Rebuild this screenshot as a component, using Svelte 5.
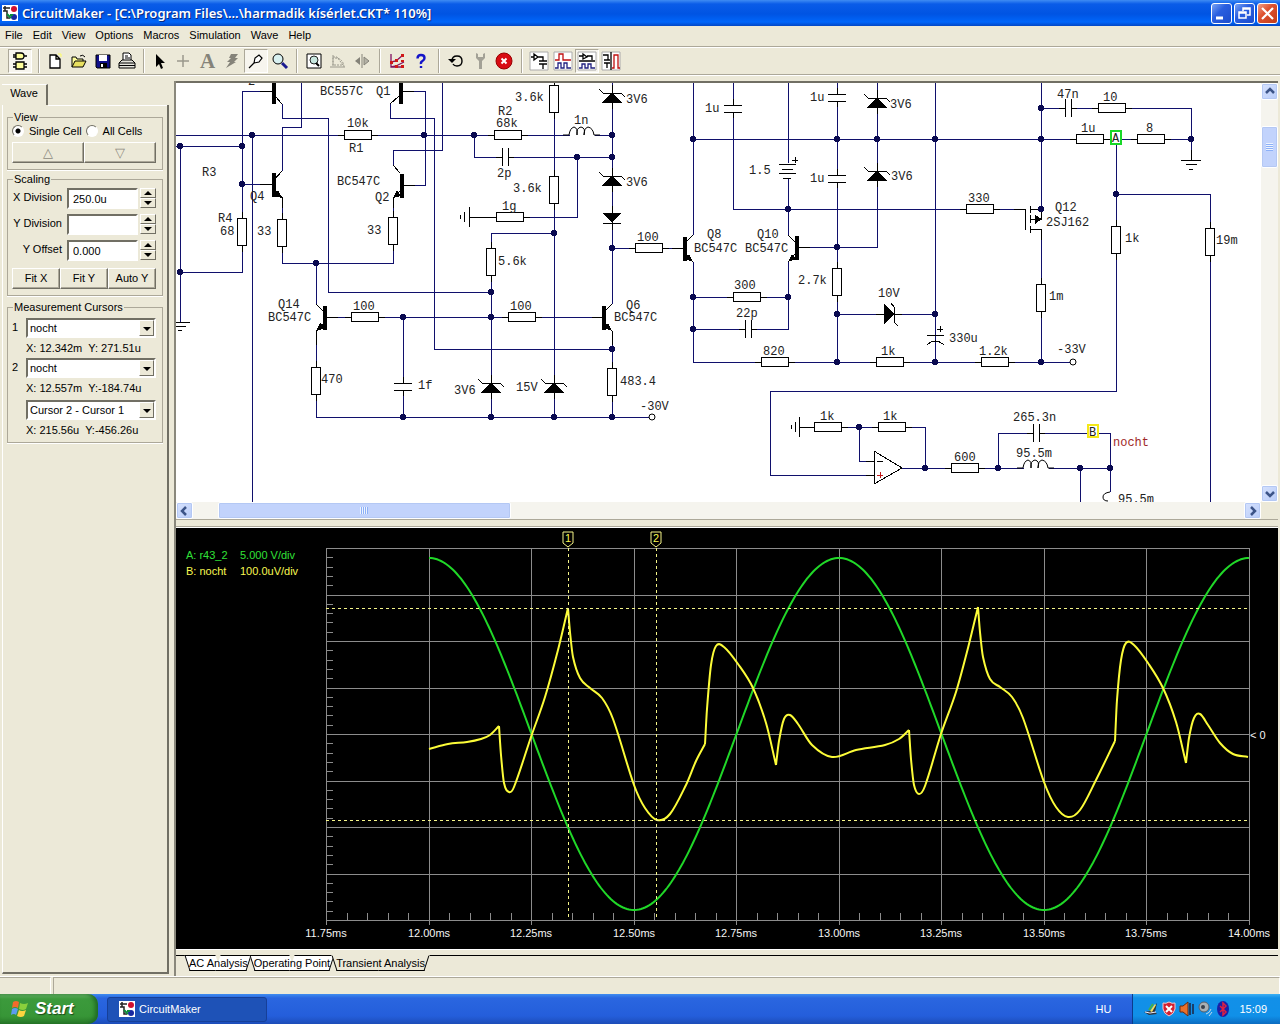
<script lang="ts">
  type Point = [number, number];

  const menus = ['File', 'Edit', 'View', 'Options', 'Macros', 'Simulation', 'Wave', 'Help'];

  const toolGroups = [
    [
      {
        name: 'Digital gates',
        pressed: true,
        art: '<path d="M4 0h5q3 0 3 3t-3 3H4zM1 2h3M1 4h3M12 3h3M4 9h8v7H4zM1 11h3M1 14h3M12 11h3M12 14h3" fill="#ffff9c" stroke="#000" stroke-width="1.300"/>',
      },
    ],
    [
      { name: 'New', art: '<path d="M3 2h6l4 4v9H3zM9 2v4h4" fill="#fff" stroke="#000" stroke-width="1.300"/><path d="M11 1h3v3" fill="none" stroke="#ffff60"/>' },
      { name: 'Open', art: '<path d="M1 14V4h4l1 2h6v2" fill="#ffff9c" stroke="#000"/><path d="M1 14l3-6h11l-3 6z" fill="#e8e060" stroke="#000"/><path d="M9 3q3-2 5 1" fill="none" stroke="#000"/>' },
      { name: 'Save', art: '<path d="M1 2h14v13H2l-1-1z" fill="#10108a" stroke="#000"/><path d="M4 2h8v6H4z" fill="#fff"/><path d="M5 10h7v5H5z" fill="#000"/><path d="M6 11h2v3H6z" fill="#fff"/>' },
      { name: 'Print', art: '<path d="M4 7V0h6l2 2v5" fill="#fff" stroke="#000"/><path d="M6 3h3M6 5h5" stroke="#000"/><path d="M0 10l3-3h10l3 3v5H0z" fill="#e4e4dc" stroke="#000"/><path d="M0 10h16M0 12.500h16" stroke="#000"/>' },
    ],
    [
      { name: 'Select', art: '<path d="M4 1v13l3-3 2 5 2-1-2-5h4z" fill="#000"/>' },
      { name: 'Wire', art: '<path d="M7 2v12M1 8h12" stroke="#9a988c" stroke-width="1.500"/>' },
      { name: 'Text', art: '<text class="letter" x="0" y="15">A</text>' },
      { name: 'Delete', art: '<path d="M7 1h7l-3 4h3l-4 4h2L2 15l4-6H3l4-4H5z" fill="#858379"/>' },
      { name: 'Probe', pressed: true, art: '<path d="M1 15l5-5M6 10l1-5 4-3 3 3-3 4z" fill="#fff" stroke="#000" stroke-width="1.200"/>' },
      { name: 'Zoom', art: '<circle cx="6" cy="6" r="5" fill="#d8f0f0" stroke="#000"/><path d="M10 10l5 5" stroke="#1a1a90" stroke-width="3"/>' },
    ],
    [
      { name: 'Fit page', art: '<path d="M1 1h14v14H1z" fill="#fff" stroke="#000"/><circle cx="8" cy="7" r="4" fill="#c8e8e0" stroke="#222"/><path d="M10 10l3 3" stroke="#000" stroke-width="2"/>' },
      { name: 'Rotate', art: '<path d="M3 2v12M3 4h4l6 8H3zM5 5q8 0 9 9" fill="none" stroke="#9a988c" stroke-dasharray="2 1"/><path d="M0 14h15" stroke="#9a988c"/>' },
      { name: 'Mirror', art: '<path d="M8 1v14" stroke="#858379"/><path d="M6 4v8L1 8z" fill="#858379"/><path d="M10 4v8l5-4z" fill="#b4b2a6" stroke="#858379"/>' },
    ],
    [
      { name: 'Check wiring', art: '<path d="M2 1v13h13M2 9l5-1 7-6M2 14l5-1 8-4" fill="none" stroke="#801060" stroke-width="1.300"/><path d="M1 8h3v3H1zM6 6h3v3H6zM12 1h3v3h-3zM6 12h3v3H6zM12 12h3v3h-3zM12 7h3v2h-3z" fill="#d01818"/>' },
      { name: 'Help', art: '<path d="M4.500 5.500q0-3.500 3.500-3.500t3.500 3q0 2-2 3t-1.500 3M8 13v2" fill="none" stroke="#1414c8" stroke-width="2.400"/>' },
    ],
    [
      { name: 'Reset', art: '<path d="M4 8q0-5 5-5 5 0 5 5t-5 5q-3 0-4-2" fill="none" stroke="#000" stroke-width="1.400"/><path d="M0 6h8l-4 4z" fill="#000"/>' },
      { name: 'Analyses', art: '<path d="M4 0v5l3 3v8h3V8l3-3V0l-2 1v3H6V1z" fill="#a3a196"/>' },
      { name: 'Stop', art: '<circle cx="8" cy="8" r="8" fill="#d80c14" stroke="#900"/><path d="M5.500 5.500l5 5M10.500 5.500l-5 5" stroke="#fff" stroke-width="2"/>' },
    ],
    [
      { name: 'Schematic', art: '<path d="M-1-1h18v18H-1z" fill="#fff" stroke="#aaa"/><path d="M0 4h3M3 1v6l4-3zM7 4h5v4M8 8h8M8 11h8M12 11v5" fill="none" stroke="#000" stroke-width="1.300"/>' },
      { name: 'Waveforms', art: '<path d="M-1-1h18v18H-1z" fill="#fff" stroke="#aaa"/><path d="M0 7h4V1h4v6h8" fill="none" stroke="#c01010" stroke-width="1.300"/><path d="M0 15h3v-5h3v5h3v-5h3v5h4" fill="none" stroke="#202080" stroke-width="1.300"/>' },
      { name: 'Split horizontally', pressed: true, art: '<path d="M-1-1h18v18H-1z" fill="#fff" stroke="#aaa"/><path d="M0 3h4M4 1v5l4-2zM8 3h5v4M0 8h16" fill="none" stroke="#000" stroke-width="1.300"/><path d="M0 15h3v-4h3v4h3v-4h3v4h4" fill="none" stroke="#202080" stroke-width="1.300"/>' },
      { name: 'Split vertically', art: '<path d="M-1-1h18v18H-1z" fill="#fff" stroke="#aaa"/><path d="M0 2h5v5M1 7h6M1 10h6M4 10v5M8-1v18" fill="none" stroke="#000" stroke-width="1.300"/><path d="M9 15h2V2h4v13h2" fill="none" stroke="#c01010" stroke-width="1.300"/>' },
    ],
  ];

  let cell = 'single';
  let xDivision = '250.0u';
  let yDivision = '';
  let yOffset = '0.000';

  const cursors = [
    { id: '1', trace: 'nocht', readout: 'X: 12.342m  Y: 271.51u' },
    { id: '2', trace: 'nocht', readout: 'X: 12.557m  Y:-184.74u' },
    { id: '', trace: 'Cursor 2 - Cursor 1', readout: 'X: 215.56u  Y:-456.26u' },
  ];

  const wires = [
    'M260 91H242V272H180M176 146H242M180 146V322M252 135V502M176 135H612M242 184H260',
    'M282 104V118H328V292H491M301 83V127H282V171M282 200V263H393V200M316 263V304',
    'M414 91H425V185H415M390 104V118H434V349H612M442 83V150H393V165',
    'M474 135V157H612M577 157V217H469M554 83V417M612 83V304M554 233H491V417',
    'M612 248H672M693 83V235M693 262V362H1070M693 297H788M693 329H788V262M788 235V178M788 163V83',
    'M693 139H1191M733 83V209H1014M837 83V362M877 83V247H810M935 83V362M837 314H935',
    'M1041 83V209M1041 230V362M1041 108H1191V150M1116 139V391H770V475H866M1116 194H1210V502',
    'M338 317H592M316 331V417H649M403 317V417M612 331V417',
    'M806 427H925V468M859 427V461H868M902 468H1110M998 468V433H1110V492M1080 468V502',
  ];

  // collector/emitter leads and other thin black artwork
  const leads = [
    'M260 91H272M275 96L282 104M401 91H414M399 96L390 104',
    'M260 184H272M282 171L275 179M275 190L282 197V208M393 165L400 173M404 185H415M401 190L393 198V208',
    'M316 304L323 311M327 317H338M324 323L316 331V345M612 304L605 311M592 317H602M605 323L612 331V345',
    'M672 248H683M693 235L686 242M686 254L693 262M788 235L795 242M799 247H810M796 253L788 262',
    'M1014 209H1025V230M1030 206V213M1030 215V223M1030 226V233M1030 209H1041V219H1030M1030 229H1041V240',
    'M173 322H190M175 326H186M178 330H182',
    'M469 207V227M464 212V222M460 215V219M469 217H490',
    'M799 417V437M795 422V432M791 425V429M799 427H808',
    'M1191 150V160M1181 160H1201M1186 164H1197M1189 169H1193',
    'M779 164H796M782 169H793M779 173H796M783 178H791M792 160H798M795 157V163',
    'M927 335H944M927 345Q935 337 944 345M937 329H943M940 326V332',
    'M874 451V484L902 468ZM877 461H883M866 475H874M866 461H874',
  ];

  const bars: Point[] = [[272, 80], [399, 80], [272, 173], [400, 174], [323, 306], [602, 306], [683, 237], [795, 236]];
  const arrows = ['282,198 278,190 274,196', '393,198 397,190 401,196', '316,331 320,323 325,328', '612,331 608,323 604,328', '693,262 689,254 685,259', '788,262 792,254 796,259', '1035,215 1035,224 1042,219'];

  // resistors: start of the body along the wire, position of the wire across it
  const hResistors: Point[] = [[344, 135], [494, 135], [496, 217], [635, 248], [351, 317], [508, 317], [733, 297], [761, 362], [876, 362], [981, 362], [814, 427], [878, 427], [951, 468], [966, 209], [1098, 108], [1076, 139], [1137, 139]];
  const vResistors: Point[] = [[242, 218], [282, 219], [393, 217], [554, 85], [554, 176], [491, 248], [316, 367], [612, 368], [837, 268], [1041, 284], [1116, 226], [1210, 228]];
  const hCaps: Point[] = [[502, 157], [745, 329], [1065, 108], [1033, 433]];
  const vCaps: Point[] = [[733, 105], [837, 94], [837, 175], [403, 383]];
  const zeners: Point[] = [[612, 93], [612, 176], [877, 98], [877, 171], [491, 383], [554, 383]];
  const coils: Point[] = [[569, 135], [1023, 468]];
  const junctions: Point[] = [
    [252, 135], [424, 135], [180, 146], [242, 146], [242, 184], [180, 272], [316, 263], [474, 135], [612, 135], [577, 157], [612, 157],
    [554, 233], [612, 248], [491, 292], [491, 317], [403, 317], [612, 349], [403, 417], [491, 417], [554, 417], [612, 417],
    [693, 139], [837, 139], [877, 139], [935, 139], [1041, 139], [1041, 108], [1191, 139], [788, 209], [837, 247], [693, 297], [788, 297],
    [693, 329], [837, 314], [935, 314], [837, 362], [935, 362], [1041, 362], [1116, 194], [1041, 209],
    [859, 427], [925, 468], [998, 468], [1080, 468], [1110, 468],
  ];

  const parts: [string, number, number][] = [
    ['2', 248, 85], ['BC557C', 320, 95], ['Q1', 376, 95], ['10k', 347, 127], ['R1', 349, 152], ['BC547C', 337, 185], ['Q2', 375, 201],
    ['R3', 202, 176], ['Q4', 250, 200], ['R4', 218, 222], ['68', 220, 235], ['33', 257, 235], ['33', 367, 234],
    ['3.6k', 515, 101], ['R2', 498, 115], ['68k', 496, 127], ['1n', 574, 124], ['2p', 497, 177], ['3.6k', 513, 192], ['1g', 502, 210],
    ['3V6', 626, 103], ['3V6', 626, 186], ['5.6k', 498, 265], ['100', 637, 241], ['Q8', 707, 238], ['BC547C', 694, 252],
    ['Q14', 278, 308], ['BC547C', 268, 321], ['100', 353, 310], ['100', 510, 310], ['Q6', 626, 309], ['BC547C', 614, 321],
    ['470', 321, 383], ['1f', 418, 389], ['3V6', 454, 394], ['15V', 516, 391], ['483.4', 620, 385], ['-30V', 640, 410],
    ['1u', 705, 112], ['1u', 810, 101], ['3V6', 890, 108], ['1.5', 749, 174], ['1u', 810, 182], ['3V6', 891, 180],
    ['Q10', 757, 238], ['BC547C', 745, 252], ['300', 734, 289], ['22p', 736, 317], ['2.7k', 798, 284], ['10V', 878, 297], ['330u', 949, 342],
    ['820', 763, 355], ['1k', 881, 355], ['1.2k', 979, 355], ['-33V', 1057, 353], ['1m', 1049, 300],
    ['47n', 1057, 98], ['10', 1103, 101], ['1u', 1081, 132], ['8', 1146, 132], ['330', 968, 202], ['Q12', 1055, 211], ['2SJ162', 1046, 226],
    ['1k', 1125, 242], ['19m', 1216, 244], ['1k', 820, 420], ['1k', 883, 420], ['600', 954, 461], ['265.3n', 1013, 421], ['95.5m', 1016, 457], ['95.5m', 1118, 503],
  ];

  const gridX = Array.from({ length: 10 }, (_, i) => Math.round(326 + i * 102.5));
  const gridY = Array.from({ length: 9 }, (_, i) => Math.round(548 + i * 46.5));
  const ticksX = Array.from({ length: 45 }, (_, i) => Math.round(326 + i * 20.5));
  const ticksY = Array.from({ length: 40 }, (_, i) => Math.round(548 + i * 9.3));
  const times = ['11.75ms', '12.00ms', '12.25ms', '12.50ms', '12.75ms', '13.00ms', '13.25ms', '13.50ms', '13.75ms', '14.00ms'];

  const sine = Array.from({ length: 411 }, (_, i) => 429 + i * 2)
    .filter((x) => x <= 1249)
    .map((x) => `${x},${(734 - 176 * Math.cos((2 * Math.PI * (x - 429)) / 410)).toFixed(1)}`)
    .join(' ');

  // each run is smooth, the runs meet in the sharp corners
  const nochtRuns: Point[][] = [
    [[429, 749], [448, 744], [467, 742], [481, 739], [490, 735], [499, 726]],
    [[499, 726], [501, 755], [504, 783], [509, 792], [514, 787], [531, 737], [545, 697], [558, 650], [568, 608]],
    [[568, 608], [570, 632], [573, 657], [580, 678], [590, 688], [602, 698], [613, 719], [634, 785], [645, 808], [657, 820], [670, 814], [686, 785], [696, 761], [705, 744]],
    [[705, 744], [707, 709], [711, 665], [716, 646], [724, 647], [738, 664], [753, 688], [766, 723], [776, 765]],
    [[776, 765], [779, 741], [784, 719], [790, 715], [798, 724], [812, 745], [832, 757], [856, 750], [885, 745], [899, 739], [909, 730]],
    [[909, 730], [911, 759], [914, 785], [919, 794], [925, 786], [941, 734], [956, 692], [968, 648], [978, 607]],
    [[978, 607], [980, 632], [983, 657], [990, 679], [1000, 687], [1012, 697], [1023, 718], [1044, 782], [1056, 807], [1068, 817], [1080, 810], [1096, 780], [1115, 741]],
    [[1115, 741], [1117, 700], [1121, 660], [1126, 643], [1134, 645], [1148, 663], [1163, 688], [1176, 722], [1186, 763]],
    [[1186, 763], [1189, 738], [1194, 718], [1200, 714], [1208, 725], [1220, 743], [1233, 754], [1248, 757]],
  ];

  function smooth(points: Point[]): string {
    let d = `M${points[0]}`;
    for (let i = 0; i < points.length - 1; i++) {
      const p0 = points[i - 1] ?? points[i];
      const p1 = points[i];
      const p2 = points[i + 1];
      const p3 = points[i + 2] ?? p2;
      // horizontal handles stay inside the step so steep edges do not overshoot
      const reach = (p2[0] - p1[0]) / 3;
      const s1 = (p2[1] - p0[1]) / (p2[0] - p0[0]);
      const s2 = (p3[1] - p1[1]) / (p3[0] - p1[0]);
      d += `C${p1[0] + reach} ${p1[1] + s1 * reach} ${p2[0] - reach} ${p2[1] - s2 * reach} ${p2[0]} ${p2[1]}`;
    }
    return d;
  }

  const nocht = nochtRuns.map(smooth).join('');
</script>

{#snippet appIcon()}
  <svg class="app-icon" viewBox="0 0 16 16" aria-hidden="true">
    <rect width="16" height="16" fill="#fff" />
    <path d="M1 3h7M1 6h4v7h3M3 1v5" fill="none" stroke="#222" stroke-width="1.5" />
    <circle cx="12" cy="4" r="3" fill="#d01030" />
    <circle cx="12" cy="12" r="3" fill="#1828a0" />
    <path d="M5 9l4 4M8 10h3" stroke="#0a8a3a" stroke-width="2" />
  </svg>
{/snippet}

<div class="desktop">
  <header class="titlebar">
    {@render appIcon()}
    <h1>CircuitMaker - [C:\Program Files\...\harmadik kísérlet.CKT* 110%]</h1>
    <div class="window-buttons">
      <button aria-label="Minimize"><svg viewBox="0 0 19 19"><path d="M4 14h7" stroke="#fff" stroke-width="3" /></svg></button>
      <button aria-label="Restore"><svg viewBox="0 0 19 19"><path d="M4 8h7v6H4zM4 9h7M8 7V4h7v7h-3M8 5h7" fill="none" stroke="#fff" stroke-width="1.500" /></svg></button>
      <button class="close" aria-label="Close"><svg viewBox="0 0 19 19"><path d="M4 4l11 11M15 4L4 15" stroke="#fff" stroke-width="2.200" /></svg></button>
    </div>
  </header>

  <nav class="menubar">
    {#each menus as menu}
      <button>{menu}</button>
    {/each}
  </nav>

  <div class="toolbar">
    {#each toolGroups as group, i}
      <div class="tool-group" class:wide={i > 2}>
        {#each group as tool}
          <button class:pressed={tool.pressed} aria-label={tool.name}>
            <svg viewBox="0 0 16 16">{@html tool.art}</svg>
          </button>
        {/each}
      </div>
    {/each}
  </div>

  <main>
    <aside>
      <button class="side-tab">Wave</button>
      <div class="side-page">
        <fieldset>
          <legend>View</legend>
          <div class="radios">
            <label><input type="radio" value="single" bind:group={cell} />Single Cell</label>
            <label><input type="radio" value="all" bind:group={cell} />All Cells</label>
          </div>
          <div class="button-row">
            <button class="dim">△</button>
            <button class="dim">▽</button>
          </div>
        </fieldset>

        <fieldset class="scaling">
          <legend>Scaling</legend>
          <div class="field">
            <label for="xdiv">X Division</label>
            <input id="xdiv" bind:value={xDivision} />
            <span class="spinner"><button aria-label="Increase X division"></button><button aria-label="Decrease X division" class="down"></button></span>
          </div>
          <div class="field">
            <label for="ydiv">Y Division</label>
            <input id="ydiv" bind:value={yDivision} />
            <span class="spinner"><button aria-label="Increase Y division"></button><button aria-label="Decrease Y division" class="down"></button></span>
          </div>
          <div class="field">
            <label for="yoff">Y Offset</label>
            <input id="yoff" bind:value={yOffset} />
            <span class="spinner"><button aria-label="Increase Y offset"></button><button aria-label="Decrease Y offset" class="down"></button></span>
          </div>
          <div class="button-row fit">
            <button>Fit X</button>
            <button>Fit Y</button>
            <button>Auto Y</button>
          </div>
        </fieldset>

        <fieldset class="cursors">
          <legend>Measurement Cursors</legend>
          {#each cursors as cursor, i}
            <div class="cursor">
              <label for="cursor{i}">{cursor.id}</label>
              <span class="combo">
                <select id="cursor{i}" aria-label={cursor.id ? `Cursor ${cursor.id}` : 'Difference'}>
                  <option>{cursor.trace}</option>
                </select>
              </span>
              <output>{cursor.readout}</output>
            </div>
          {/each}
        </fieldset>
      </div>
    </aside>

    <div class="views">
      <section class="schematic">
        <svg class="sheet" viewBox="176 83 1085 419">
          <g class="wire">
            {#each wires as d}<path {d} />{/each}
          </g>
          <g class="part">
            {#each leads as d}<path {d} />{/each}
            {#each hResistors as [x, y]}
              <path d="M{x - 6} {y}h40" />
              <rect {x} y={y - 5} width="27" height="9" />
            {/each}
            {#each vResistors as [x, y]}
              <path d="M{x} {y - 6}v40" />
              <rect x={x - 5} {y} width="9" height="27" />
            {/each}
            {#each hCaps as [x, y]}
              <path class="gap" d="M{x + 1} {y}h5" />
              <path d="M{x - 6} {y}h6v-9v18M{x + 12} {y}h-6v-9v18" />
            {/each}
            {#each vCaps as [x, y]}
              <path class="gap" d="M{x} {y + 1}v6" />
              <path d="M{x} {y - 6}v6h-9h18M{x} {y + 13}v-6h-9h18" />
            {/each}
            {#each zeners as [x, y]}
              <path d="M{x - 13} {y - 4}l4 4h18l4 4M{x} {y - 8}v24" />
              <path class="solid" d="M{x} {y}l9 9h-18z" />
            {/each}
            <path class="solid" d="M603 213h18l-9 9z" />
            <path d="M603 223h18M612 206v24" />
            <path class="solid" d="M884 304v20l10-10z" />
            <path d="M891 303l3 4v15l4 4M876 314h26" />
            {#each coils as [x, y]}
              <path class="gap" d="M{x + 1} {y}h25" />
              <path class="curve" d="M{x - 6} {y}h6q1-7 5-8q4 1 3 8q-1-7 4-8q5 1 3 8q0-7 4-8q5 1 6 8h6" />
            {/each}
            <path class="curve" d="M1110 492q-7 1-7 5t5 4" />
            {#each bars as [x, y]}
              <rect class="solid" {x} {y} width="3" height="23" />
            {/each}
            {#each arrows as points}<polygon class="solid" {points} />{/each}
            <circle class="terminal" cx="652" cy="417" r="3" />
            <circle class="terminal" cx="1073" cy="362" r="3" />
          </g>
          <g class="junction">
            {#each junctions as [cx, cy]}<circle {cx} {cy} r="2.500" />{/each}
          </g>
          <g class="names">
            {#each parts as [name, x, y]}<text {x} {y}>{name}</text>{/each}
            <text class="red" x="1113" y="446">nocht</text>
          </g>
          <path class="red-line" d="M877 475h6M880 472v6" />
          <g class="names">
            <rect class="probe-a" x="1111" y="131" width="10" height="13" />
            <text x="1112" y="142">A</text>
            <rect class="probe-b" x="1088" y="425" width="10" height="12" />
            <text x="1089" y="436">B</text>
          </g>
        </svg>
        <div class="scroll vertical">
          <button aria-label="Scroll up"><svg viewBox="0 0 15 15"><path d="M4 9l4-4 4 4" /></svg></button>
          <span class="thumb"></span>
          <button class="end" aria-label="Scroll down"><svg viewBox="0 0 15 15"><path d="M4 6l4 4 4-4" /></svg></button>
        </div>
        <div class="scroll horizontal">
          <button aria-label="Scroll left"><svg viewBox="0 0 15 15"><path d="M9 4L5 8l4 4" /></svg></button>
          <span class="thumb"></span>
          <button class="end" aria-label="Scroll right"><svg viewBox="0 0 15 15"><path d="M6 4l4 4-4 4" /></svg></button>
        </div>
      </section>

      <section class="waves">
        <svg class="scope" viewBox="176 528 1102 421">
          <g class="grid">
            {#each gridX as x}<path d="M{x} 548V925" />{/each}
            {#each gridY as y}<path d="M326 {y}H1249" />{/each}
            {#each ticksX as x}<path d="M{x} 913V920" />{/each}
            {#each ticksY as y}<path d="M326 {y}h7" />{/each}
          </g>
          <polyline class="trace-a" points={sine} />
          <path class="trace-b" d={nocht} />
          <path class="cursor-line" d="M568 548V920M656 548V920M326 608H1248M326 820H1248" />
          <path class="flag" d="M563 532h10v11l-5 4-5-4zM651 532h10v11l-5 4-5-4z" />
          <text class="b-text" x="565" y="542">1</text>
          <text class="b-text" x="653" y="542">2</text>
          <text class="a-text" x="186" y="559">A: r43_2</text>
          <text class="a-text" x="240" y="559">5.000 V/div</text>
          <text class="b-text" x="186" y="575">B: nocht</text>
          <text class="b-text" x="240" y="575">100.0uV/div</text>
          {#each times as time, i}<text class="time" x={gridX[i]} y="937">{time}</text>{/each}
          <text x="1250" y="739">&lt; 0</text>
        </svg>
      </section>

      <div class="sheet-tabs">
        <span class="lead-in"></span>
        <button>AC Analysis</button>
        <button>Operating Point</button>
        <button class="active">Transient Analysis</button>
        <span class="rest"></span>
      </div>
    </div>
  </main>

  <div class="statusbar"><span></span><span></span></div>

  <footer class="taskbar">
    <button class="start">
      <svg viewBox="0 0 20 20" aria-hidden="true">
        <path d="M3 3q3-2 6 0L8 9Q5 7 2 9z" fill="#f26a2c" />
        <path d="M10 4q4 2 8 0l-2 6q-3 2-7 0z" fill="#8ad03c" />
        <path d="M2 10q3-2 6 0l-2 6q-2-2-5 0z" fill="#5c9cf0" />
        <path d="M9 11q3 2 7 0l-2 6q-3 2-7 0z" fill="#fcd440" />
      </svg>
      Start
    </button>
    <button class="task">{@render appIcon()}CircuitMaker</button>
    <span class="lang">HU</span>
    <div class="tray">
      <svg viewBox="0 0 16 16"><path d="M1 11l6-1 7-8-2 9 2 2-8 1z" fill="#30343c" /><path d="M7 10l5-7 1 1-4 7z" fill="#f4e060" /><path d="M6 9l4-6" stroke="#40b050" stroke-width="2" /><path d="M2 11l5 1 6-1" stroke="#eef" /></svg>
      <svg viewBox="0 0 16 16"><path d="M8 1q3 2 6 1v6q-1 5-6 7-5-2-6-7V2q3 1 6-1z" fill="#d42030" stroke="#f4c8cc" /><path d="M5 5l6 6M11 5l-6 6" stroke="#fff" stroke-width="2" /></svg>
      <svg viewBox="0 0 16 16"><path d="M1 5h3l5-4v14l-5-4H1z" fill="#e8702c" stroke="#6a2a10" /><path d="M11 2v12M14 3v10" stroke="#1c2440" stroke-width="1.500" /></svg>
      <svg viewBox="0 0 16 16"><circle cx="7" cy="6" r="5" fill="#a8b0b4" stroke="#58606a" /><circle cx="6" cy="6" r="2" fill="#38404a" /><path d="M9 13q4-1 5-5M12 15l3-4" fill="none" stroke="#c0d8ec" /></svg>
      <svg viewBox="0 0 16 16"><ellipse cx="8" cy="8" rx="6" ry="8" fill="#1820a8" /><path d="M5 5l6 6-3 3V2l3 3-6 6" fill="none" stroke="#e02040" stroke-width="1.500" /></svg>
      <time>15:09</time>
    </div>
  </footer>
</div>

<style>
  :global(body) {
    margin: 0;
    background: #ece9d8;
  }

  .desktop {
    display: flex;
    flex-direction: column;
    min-height: 100vh;
    background: #ece9d8;
    color: #000;
    font: 11px/13px 'Liberation Sans', Arial, sans-serif;
  }

  button,
  input,
  select {
    box-sizing: border-box;
    margin: 0;
    padding: 0;
    border: 0;
    border-radius: 0;
    background: none;
    color: inherit;
    font: inherit;
  }

  .titlebar {
    display: flex;
    align-items: center;
    height: 26px;
    padding: 0 2px;
    background: linear-gradient(#3f8cf3 0, #0a5ce8 4px, #0054e3 14px, #0066fa 22px, #0347c4 26px);
    color: #fff;
  }

  .app-icon {
    width: 16px;
    height: 16px;
    flex-shrink: 0;
  }

  h1 {
    flex: 1;
    margin: 0 0 0 4px;
    font: 600 13px/18px 'Noto Sans', sans-serif;
    white-space: nowrap;
    text-shadow: 1px 1px 0 #0a2a80;
  }

  .window-buttons {
    display: flex;
    gap: 2px;
  }

  .window-buttons button {
    width: 21px;
    height: 21px;
    border: 1px solid #fff;
    border-radius: 3px;
    background: linear-gradient(135deg, #7aa4f4, #2a5fe0 40%, #1c4ccc);
  }

  .window-buttons .close {
    background: linear-gradient(135deg, #f0a088, #de5230 40%, #c03c18);
  }

  .window-buttons svg {
    display: block;
  }

  .menubar {
    display: flex;
    gap: 10px;
    height: 20px;
    padding-left: 5px;
    border-bottom: 1px solid #aca899;
  }

  .menubar button {
    padding-bottom: 2px;
  }

  .toolbar {
    display: flex;
    align-items: center;
    height: 26px;
    padding-left: 4px;
    border-top: 1px solid #fff;
    border-bottom: 1px solid #aca899;
  }

  .tool-group {
    display: flex;
    padding: 0 4px;
    border-right: 1px solid #aca899;
    box-shadow: 1px 0 #fff;
  }

  .tool-group.wide {
    padding: 0 5px;
  }

  .tool-group:first-child {
    padding-right: 6px;
  }

  .tool-group:last-child {
    border: 0;
    box-shadow: none;
  }

  .tool-group button {
    width: 24px;
    height: 24px;
    border: 1px solid transparent;
  }

  .tool-group .pressed {
    border-color: #aca899 #fff #fff #aca899;
    background: #f7f5ee;
  }

  .tool-group svg {
    display: block;
    width: 16px;
    height: 16px;
    margin: 0 auto;
    overflow: visible;
  }

  .tool-group :global(.letter) {
    fill: #858379;
    font: 700 21px 'Liberation Serif', serif;
  }

  main {
    display: flex;
    flex: 1;
    border-top: 1px solid #fff;
  }

  aside {
    display: flex;
    flex-direction: column;
    flex: 0 0 167px;
    box-sizing: border-box;
    margin: 8px 5px 2px 2px;
  }

  .side-tab {
    align-self: flex-start;
    width: 46px;
    height: 21px;
    padding-bottom: 3px;
    border-right: 2px solid #716f64;
    border-top: 1px solid #fff;
  }

  .side-page {
    flex: 1;
    padding: 6px 4px 0 4px;
    border-right: 2px solid #716f64;
    border-bottom: 2px solid #716f64;
    border-left: 1px solid #fff;
    background: linear-gradient(#fff, #fff) 45px 0 / 100% 1px no-repeat;
  }

  fieldset {
    box-sizing: border-box;
    height: 59px;
    min-width: 0;
    margin: 0 0 3px;
    padding: 0 6px 0 4px;
    border: 1px solid #aca899;
    box-shadow: 0 1px #fff;
  }

  .scaling {
    height: 123px;
    margin-bottom: 5px;
  }

  .cursors {
    height: 142px;
  }

  legend {
    margin-left: 1px;
    padding: 0 1px;
  }

  .radios {
    display: flex;
    gap: 4px;
    height: 17px;
    padding-top: 1px;
  }

  .radios label {
    display: flex;
    gap: 5px;
    white-space: nowrap;
  }

  .radios input {
    appearance: none;
    width: 12px;
    height: 12px;
    border: 1px solid;
    border-color: #716f64 #fff #fff #716f64;
    border-radius: 50%;
    background: #fff;
  }

  .radios input:checked {
    background: radial-gradient(#000 2px, #fff 3px);
  }

  .button-row {
    display: flex;
  }

  .button-row button {
    flex: 1;
    height: 21px;
    border: 1px solid;
    border-color: #fff #716f64 #716f64 #fff;
    box-shadow: inset -1px -1px #aca899;
  }

  .button-row .dim {
    color: #8c8a80;
    font: 13px/15px 'DejaVu Sans', sans-serif;
  }

  .field {
    display: flex;
    justify-content: flex-end;
    height: 26px;
  }

  .field label {
    padding: 3px 5px 0 0;
  }

  .field input {
    width: 71px;
    height: 21px;
    margin-right: 2px;
    padding-left: 4px;
    border: 2px solid;
    border-color: #716f64 #fff #fff #716f64;
    background: #fff;
  }

  .spinner {
    display: flex;
    flex-direction: column;
    width: 16px;
  }

  .spinner button {
    height: 10px;
    border: 1px solid;
    border-color: #fff #716f64 #716f64 #fff;
  }

  .spinner button::before {
    content: '';
    display: block;
    width: 0;
    margin: 0 auto;
    border: 4px solid transparent;
    border-top: 0;
    border-bottom-color: #000;
  }

  .spinner .down::before {
    border: 4px solid transparent;
    border-bottom: 0;
    border-top-color: #000;
  }

  .scaling .field:nth-child(2) {
    margin-top: 2px;
  }

  .fit {
    margin-top: 2px;
  }

  .cursor {
    display: grid;
    grid-template-columns: 14px 1fr;
    grid-template-rows: 21px 19px;
  }

  .cursor:nth-child(2) {
    margin-top: 4px;
  }

  .cursor label {
    padding-top: 3px;
  }

  .cursor:last-child {
    margin-top: 2px;
  }

  .combo {
    position: relative;
  }

  .combo select {
    appearance: none;
    width: 100%;
    height: 20px;
    padding-left: 2px;
    border: 2px solid;
    border-color: #716f64 #fff #fff #716f64;
    background: #fff;
  }

  .combo::before {
    content: '';
    position: absolute;
    top: 2px;
    right: 2px;
    width: 13px;
    height: 14px;
    border: 1px solid;
    border-color: #fff #716f64 #716f64 #fff;
    background: #ece9d8;
    pointer-events: none;
  }

  .combo::after {
    content: '';
    position: absolute;
    top: 9px;
    right: 5px;
    border: 4px solid transparent;
    border-bottom: 0;
    border-top-color: #000;
    pointer-events: none;
  }

  output {
    grid-column: 2;
    padding-top: 3px;
    white-space: pre;
  }

  .views {
    display: flex;
    flex: 1;
    flex-direction: column;
    min-width: 0;
    margin-top: 5px;
    padding-right: 2px;
    border-left: 2px solid #8a887c;
  }

  .schematic {
    display: grid;
    grid-template-columns: 1fr 17px;
    border-top: 2px solid #716f64;
    border-bottom: 1px solid #aca899;
  }

  .sheet,
  .scope {
    display: block;
    width: 100%;
    background: #fff;
    shape-rendering: crispEdges;
  }

  .wire path {
    fill: none;
    stroke: #10106c;
  }

  .part path,
  .part rect,
  .terminal {
    fill: none;
    stroke: #000;
  }

  .part rect,
  .part .terminal {
    fill: #fff;
  }

  .part .gap {
    stroke: #fff;
    stroke-width: 3;
  }

  .part .solid {
    fill: #000;
  }

  .part .curve,
  .part .terminal {
    shape-rendering: auto;
  }

  .junction {
    fill: #0a0a50;
    stroke: #0a0a50;
  }

  .names {
    fill: #222;
    font: 12px 'Liberation Mono', 'Courier New', monospace;
  }

  .names .red {
    fill: #a02828;
  }

  .red-line {
    fill: none;
    stroke: #c01818;
  }

  .probe-a {
    fill: #fff;
    stroke: #18d828;
    stroke-width: 2;
  }

  .probe-b {
    fill: #fff;
    stroke: #f4e818;
    stroke-width: 2;
  }

  .scroll {
    display: flex;
    background: #f5f4ee;
  }

  .vertical {
    flex-direction: column;
  }

  .scroll button,
  .thumb {
    box-sizing: border-box;
    border: 1px solid #fff;
    border-radius: 2px;
    background: linear-gradient(135deg, #d6e2fe, #b9ccf8);
    box-shadow: inset 0 0 0 1px #b4c8f4;
  }

  .scroll button {
    width: 17px;
    height: 17px;
  }

  .scroll .end {
    margin-top: auto;
  }

  .horizontal .end {
    margin: 0 0 0 auto;
  }

  .scroll svg {
    display: block;
  }

  .scroll path {
    fill: none;
    stroke: #3c5488;
    stroke-width: 2.5;
  }

  .vertical .thumb {
    height: 42px;
    margin-top: 26px;
    background: repeating-linear-gradient(#eef4fe 0 1px, #8cb0f8 1px 2px) center / 7px 8px no-repeat, #c2d3fc;
  }

  .horizontal .thumb {
    width: 27%;
    margin-left: 25px;
    background: repeating-linear-gradient(90deg, #eef4fe 0 1px, #8cb0f8 1px 2px) center / 8px 7px no-repeat, #c2d3fc;
  }

  .waves {
    margin-top: 7px;
    border-top: 1px solid #fff;
    box-shadow: 0 -1px #aca899;
  }

  .scope {
    background: #000;
    fill: #f4f4f4;
    font-size: 11px;
  }

  .grid {
    stroke: #8c8c8c;
  }

  .trace-a,
  .trace-b {
    fill: none;
    stroke: #20d828;
    stroke-width: 2;
    shape-rendering: auto;
  }

  .trace-b {
    stroke: #fcfc38;
  }

  .cursor-line {
    fill: none;
    stroke: #f4f488;
    stroke-dasharray: 3 3;
  }

  .flag {
    fill: none;
    stroke: #f4f488;
    shape-rendering: auto;
  }

  .a-text {
    fill: #30e038;
  }

  .b-text {
    fill: #f8f850;
  }

  .time {
    text-anchor: middle;
  }

  .sheet-tabs {
    display: flex;
    padding: 5px 0 2px;
    border-top: 1px solid #fff;
  }

  .sheet-tabs button {
    position: relative;
    z-index: 0;
    height: 16px;
    margin: 0 3px;
  }

  .sheet-tabs button::before,
  .sheet-tabs button::after {
    content: '';
    position: absolute;
    z-index: -1;
    top: 0;
    bottom: 0;
    left: -2px;
    right: 50%;
    border: solid #000;
    border-width: 1px 0 1px 1px;
    background: #fff;
    transform: skewX(18deg);
  }

  .sheet-tabs button::after {
    left: 50%;
    right: -2px;
    border-width: 1px 1px 1px 0;
    transform: skewX(-18deg);
  }

  .sheet-tabs .active::before,
  .sheet-tabs .active::after {
    border-top-color: #ece9d8;
    background: #ece9d8;
  }

  .lead-in {
    width: 10px;
    border-top: 1px solid #000;
  }

  .rest {
    flex: 1;
    border-top: 1px solid #000;
  }

  .statusbar {
    display: flex;
    gap: 2px;
    height: 17px;
    border-top: 1px solid #fff;
  }

  .statusbar span {
    width: 50px;
    border-top: 1px solid #aca899;
    border-right: 1px solid #fff;
  }

  .statusbar span + span {
    flex: 1;
    border-left: 1px solid #aca899;
  }

  .taskbar {
    display: flex;
    align-items: center;
    height: 30px;
    background: linear-gradient(#3f8cf0 0, #2a66e0 4px, #245edb 22px, #1c4cb8 30px);
    color: #fff;
  }

  .start {
    display: flex;
    align-items: center;
    gap: 5px;
    width: 98px;
    height: 30px;
    padding-left: 10px;
    border-radius: 0 10px 10px 0;
    background: linear-gradient(#6cb86c 0, #3c9a3c 5px, #379637 22px, #2a7a2a 30px);
    box-shadow: inset -3px 0 4px #1f6a24;
    font: italic 700 17px/20px 'Liberation Sans', Arial, sans-serif;
    text-shadow: 1px 1px 1px #1a4a1a;
  }

  .start svg {
    width: 20px;
    height: 20px;
  }

  .task {
    display: flex;
    align-items: center;
    gap: 4px;
    width: 160px;
    height: 25px;
    margin-left: 9px;
    padding-left: 11px;
    border: 1px solid #163f98;
    border-radius: 3px;
    background: #1e52b7;
  }

  .lang {
    margin-left: auto;
    padding-right: 21px;
  }

  .tray {
    display: flex;
    align-items: center;
    gap: 2px;
    height: 30px;
    padding: 0 13px 0 10px;
    border-left: 1px solid #0c3c8c;
    background: linear-gradient(#3cb0f4 0, #1290e8 4px, #1090e8 22px, #0c6cc0 30px);
  }

  .tray svg {
    width: 16px;
    height: 16px;
  }

  .tray time {
    margin-left: 6px;
  }
</style>
